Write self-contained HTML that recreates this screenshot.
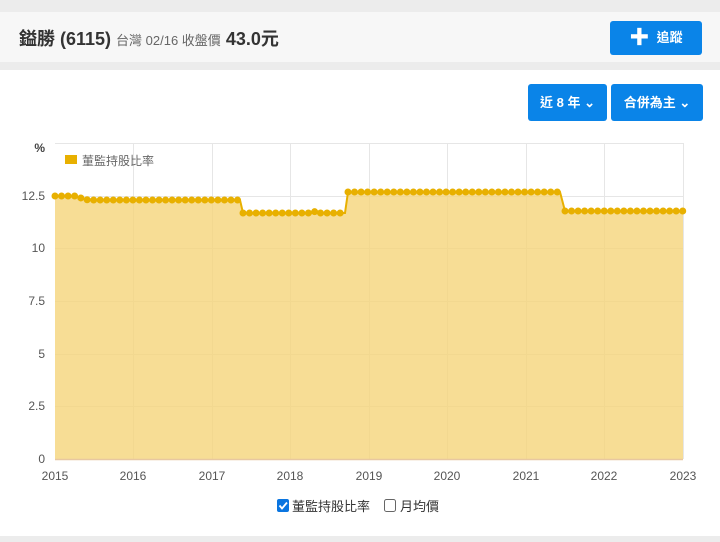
<!DOCTYPE html>
<html><head><meta charset="utf-8"><style>
body{margin:0;width:720px;height:542px;background:#ececec;font-family:"Liberation Sans","Noto Sans CJK TC",sans-serif;position:relative;overflow:hidden}
.hdr{position:absolute;left:0;top:12px;width:720px;height:50px;background:#f7f7f7}
.title{position:absolute;left:19px;top:13px;font-size:18px;color:#333;font-weight:bold}
.sub{font-size:13px;color:#666;font-weight:normal}
.price{font-size:18px;font-weight:bold;color:#333}
.btn{position:absolute;background:#0a84e8;color:#fff;font-size:13px;font-weight:bold;border-radius:3px;text-align:center}
.card{position:absolute;left:0;top:70px;width:720px;height:466px;background:#fff}
</style></head><body>
<div class="hdr">
<div class="title">鎰勝 (6115) <span class="sub">台灣 02/16 收盤價</span> <span class="price">43.0元</span></div>
<div class="btn" style="left:610px;top:9px;width:92px;height:34px;line-height:34px"><span style="font-size:20px;vertical-align:-2px">✚</span>&nbsp; 追蹤</div>
</div>
<div class="card">
<div class="btn" style="left:528px;top:14px;width:79px;height:37px;line-height:37px">近 8 年 ⌄</div>
<div class="btn" style="left:611px;top:14px;width:92px;height:37px;line-height:37px">合併為主 ⌄</div>
</div>
<svg style="position:absolute;left:0;top:0" width="720" height="542" font-family="Liberation Sans, Noto Sans CJK TC, sans-serif">
<g stroke="#e6e6e6" stroke-width="1">
<line x1="55" y1="143.5" x2="683" y2="143.5"/>
<line x1="55" y1="196.5" x2="683" y2="196.5"/>
<line x1="55" y1="248.5" x2="683" y2="248.5"/>
<line x1="55" y1="301.5" x2="683" y2="301.5"/>
<line x1="55" y1="354.5" x2="683" y2="354.5"/>
<line x1="55" y1="406.5" x2="683" y2="406.5"/>
<line x1="133.5" y1="143" x2="133.5" y2="459"/><line x1="212.5" y1="143" x2="212.5" y2="459"/>
<line x1="290.5" y1="143" x2="290.5" y2="459"/><line x1="369.5" y1="143" x2="369.5" y2="459"/>
<line x1="447.5" y1="143" x2="447.5" y2="459"/><line x1="526.5" y1="143" x2="526.5" y2="459"/>
<line x1="604.5" y1="143" x2="604.5" y2="459"/><line x1="683.5" y1="143" x2="683.5" y2="459"/>
</g>
<path d="M55,196 L75,196 L81,198 L88,200 L240,200 L243,213 L312,213 L316,211 L320,213 L345,213 L348,192 L560,192 L565,211 L683,211 L683,459 L55,459 Z" fill="#f5d47a" fill-opacity="0.8"/>
<path d="M55,196 L75,196 L81,198 L88,200 L240,200 L243,213 L312,213 L316,211 L320,213 L345,213 L348,192 L560,192 L565,211 L683,211" fill="none" stroke="#e8b000" stroke-width="2"/>
<path d="M55,196 L75,196 L81,198 L88,200 L240,200 M243,213 L312,213 L316,211 L320,213 L345,213 M348,192 L560,192 M565,211 L683,211" fill="none" stroke="#e8b000" stroke-width="7" stroke-linecap="round" stroke-dasharray="0 6.54"/>
<line x1="55" y1="459.5" x2="683" y2="459.5" stroke="#e8c7a0" stroke-width="1.5"/>
<g font-size="12" fill="#555" text-anchor="end">
<text x="45" y="152" font-weight="bold" fill="#444">%</text>
<text x="45" y="200">12.5</text><text x="45" y="252">10</text><text x="45" y="305">7.5</text>
<text x="45" y="358">5</text><text x="45" y="410">2.5</text><text x="45" y="463">0</text>
</g>
<g font-size="12" fill="#555" text-anchor="middle">
<text x="55" y="480">2015</text><text x="133" y="480">2016</text><text x="212" y="480">2017</text>
<text x="290" y="480">2018</text><text x="369" y="480">2019</text><text x="447" y="480">2020</text>
<text x="526" y="480">2021</text><text x="604" y="480">2022</text><text x="683" y="480">2023</text>
</g>
<rect x="65" y="155" width="12" height="9" fill="#e8b000"/>
<text x="82" y="165" font-size="12" fill="#666">董監持股比率</text>
<rect x="277" y="499" width="12" height="13" rx="2" fill="#0a75e0"/>
<path d="M279.5,505.5 l2.5,3 l5,-6" stroke="#fff" stroke-width="1.8" fill="none"/>
<text x="292" y="511" font-size="13" fill="#333">董監持股比率</text>
<rect x="384.5" y="499.5" width="11" height="12" rx="2" fill="#fff" stroke="#666"/>
<text x="400" y="511" font-size="13" fill="#333">月均價</text>
</svg>
</body></html>
